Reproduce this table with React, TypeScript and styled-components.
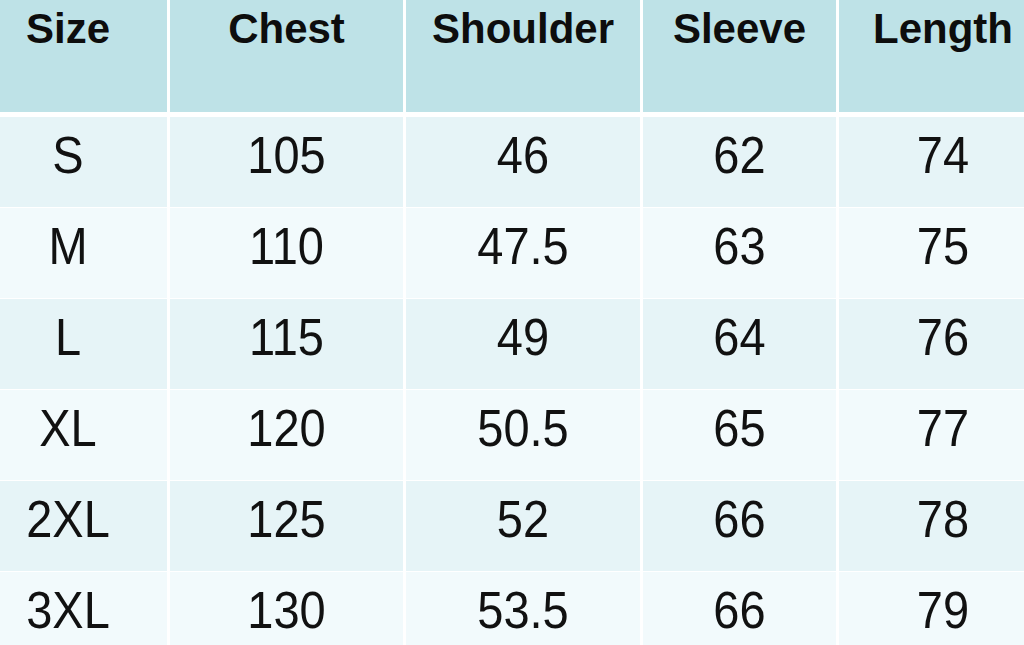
import styled, { createGlobalStyle } from 'styled-components';

const GlobalStyle = createGlobalStyle`
  html, body {
    margin: 0;
    padding: 0;
    background: #ffffff;
  }

  body {
    font-family: 'Liberation Sans', Arial, sans-serif;
    color: #111111;
  }
`;

const columns = ['Size', 'Chest', 'Shoulder', 'Sleeve', 'Length'];

const rows = [
  ['S', '105', '46', '62', '74'],
  ['M', '110', '47.5', '63', '75'],
  ['L', '115', '49', '64', '76'],
  ['XL', '120', '50.5', '65', '77'],
  ['2XL', '125', '52', '66', '78'],
  ['3XL', '130', '53.5', '66', '79'],
];

const App = () => {
  return (
    <>
      <GlobalStyle />
      <Sheet>
        <SizeTable>
          <HeaderRow>
            {columns.map((name) => (
              <HeaderCell key={name}>{name}</HeaderCell>
            ))}
          </HeaderRow>

          {rows.map((row, index) => (
            <BodyRow key={row[0]} $shaded={index % 2 === 0}>
              {row.map((value, col) => (
                <BodyCell key={col}>
                  <CellText>{value}</CellText>
                </BodyCell>
              ))}
            </BodyRow>
          ))}
        </SizeTable>
      </Sheet>
    </>
  );
};

export default App;

const Sheet = styled.div`
  width: 1024px;
  height: 645px;
  overflow: hidden;
  background: #ffffff;
`;

const SizeTable = styled.div`
  display: flex;
  flex-direction: column;
  gap: 1px;
  margin-left: -31px;
  width: 1078px;
`;

const tableColumns = '198px 233px 234px 193px 208px';

const HeaderRow = styled.div`
  display: grid;
  grid-template-columns: ${tableColumns};
  column-gap: 3px;
  height: 112px;
  margin-bottom: 4px;
`;

const HeaderCell = styled.div`
  background: #bee2e7;
  text-align: center;
  padding-top: 8px;
  font-size: 42px;
  line-height: 1;
  font-weight: 700;
  color: #0d0d0d;
`;

const BodyRow = styled.div<{ $shaded: boolean }>`
  display: grid;
  grid-template-columns: ${tableColumns};
  column-gap: 3px;
  height: 90px;

  > div {
    background: ${({ $shaded }) => ($shaded ? '#e6f4f7' : '#f2fafc')};
  }
`;

const BodyCell = styled.div`
  display: flex;
  justify-content: center;
  align-items: flex-start;
  padding-top: 14px;
`;

const CellText = styled.span`
  display: inline-block;
  font-size: 47px;
  line-height: 1;
  color: #111111;
  transform: scaleY(1.1);
`;
